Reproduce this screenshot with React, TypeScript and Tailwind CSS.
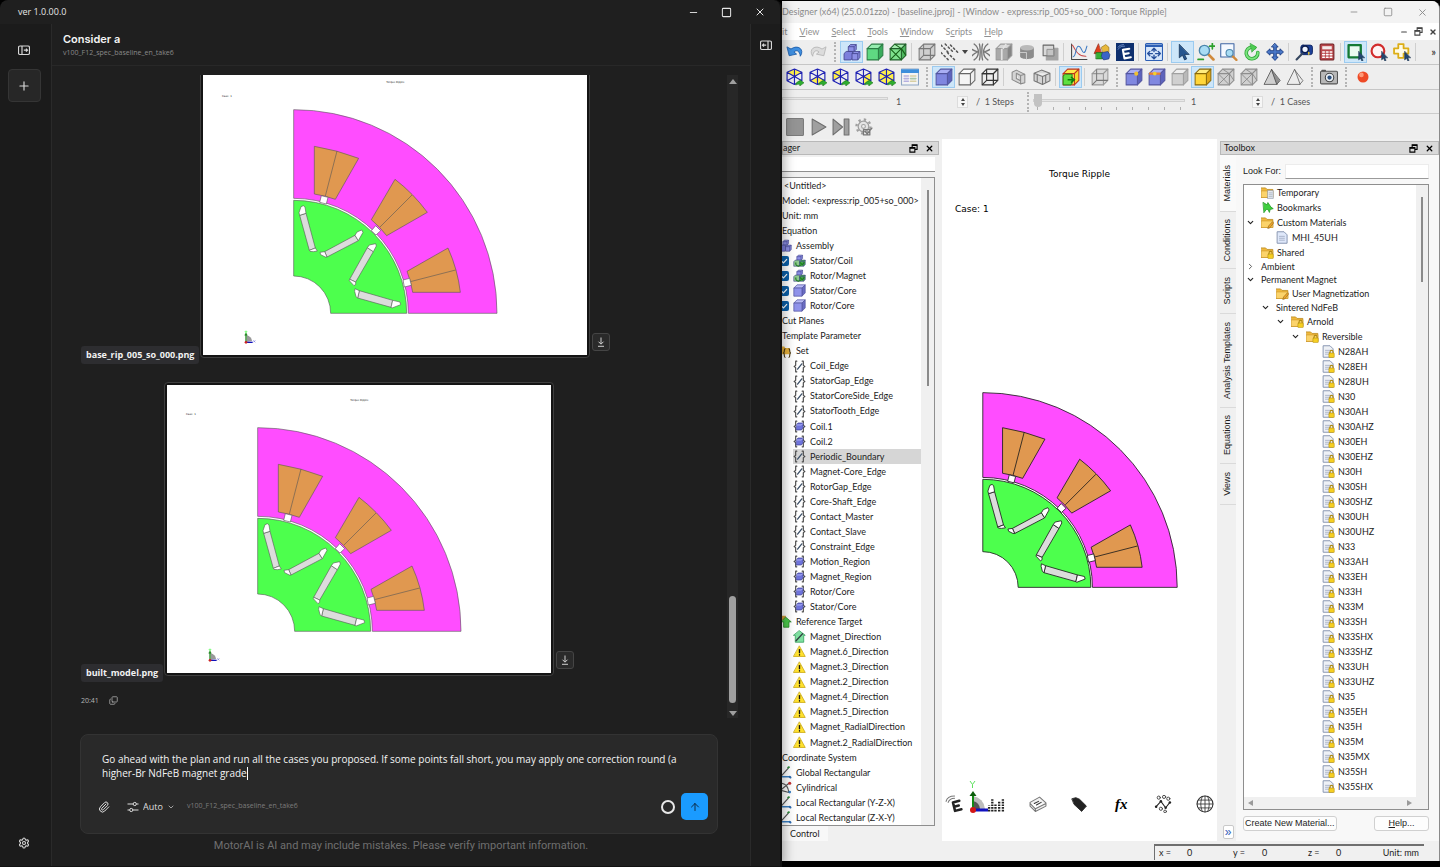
import React from "react";
import {
  ArrowUp,
  ChevronDown,
  ChevronRight,
  Copy,
  Minus,
  Paperclip,
  Plus,
  Settings,
  Square,
  X,
} from "lucide-react";

/* ---------- motor cross-section drawing ---------- */

function MotorShapes({ stroke, weight }: { stroke: string; weight: number }) {
  const coils = [
    "M343 229 Q411 240 476 265 L406 388 Q375 377 343 372 Z",
    "M585 328 Q640 370 682 427 L560 497 Q540 471 514 449 Z",
    "M744 534 Q773 598 781 667 L638 667 Q633 635 621 604 Z",
  ];
  const openings = [
    "M364 377 L384 382 L379 402 L359 397 Z",
    "M527 467 L542 482 L528 495 L514 482 Z",
    "M609 630 L629 625 L634 646 L613 651 Z",
  ];
  const magnets = [
    "M299 436 L318 430 L346 534 L328 541 Z",
    "M374 545 L465 496 L475 512 L381 561 Z",
    "M502 533 L520 545 L467 636 L449 628 Z",
    "M478 662 L578 691 L573 712 L473 684 Z",
  ];
  const pockets = [
    "M299 436 L297 428 L303 410 L310 407 L315 411 L318 430 Z",
    "M328 541 L346 534 L352 543 L340 545 L330 544 Z",
    "M374 545 L360 547 L362 554 L376 561 L381 561 Z",
    "M465 496 L471 486 L485 480 L489 487 L475 512 Z",
    "M502 533 L508 525 L527 521 L529 528 L520 545 Z",
    "M449 628 L448 632 L462 647 L467 643 L467 636 Z",
    "M478 662 L465 656 L464 664 L468 680 L473 684 Z",
    "M578 691 L600 696 L602 704 L576 714 L573 712 Z",
  ];
  return (
    <g stroke={stroke} strokeWidth={weight} strokeLinejoin="round">
      <path d="M281 119 A610 611 0 0 1 891 730 L625 730 A344 345 0 0 0 281 385 Z" fill="#ff4dff" />
      {coils.map((d) => (
        <path key={d} d={d} fill="#e09850" />
      ))}
      <path d="M411 243 L376 378 M636 375 L540 471 M767 600 L631 635" fill="none" />
      {openings.map((d) => (
        <path key={d} d={d} fill="#ffffff" />
      ))}
      <path d="M281 391 A339 339 0 0 1 620 730 L392 730 A111 112 0 0 0 281 618 Z" fill="#4dff4d" />
      {magnets.map((d) => (
        <path key={d} d={d} fill="#dcdcdc" />
      ))}
      {pockets.map((d) => (
        <path key={d} d={d} fill="#ffffff" />
      ))}
    </g>
  );
}

function MotorImage({ label }: { label: string }) {
  return (
    <svg role="img" aria-label={label} viewBox="9 -9 1152 864" className="block h-72 w-96 bg-white">
      <text x="586" y="39" textAnchor="middle" fontSize="8" fontFamily="DejaVu Sans" fill="#222">
        Torque Ripple
      </text>
      <text x="66" y="82" fontSize="8" fontFamily="DejaVu Sans" fill="#222">
        Case: 1
      </text>
      <MotorShapes stroke="#555" weight={1.8} />
      <g strokeWidth="4" fill="none">
        <path d="M140 796 A20 20 0 0 1 156 813 L140 815 Z" fill="#999" />
        <path d="M138 817 V792 M135 797 L138 791 L141 797" stroke="#2a8a2a" />
        <path d="M135 783 L138 787 L141 783" stroke="#8f8" />
        <path d="M138 817 H158" stroke="#11b" />
        <path d="M160 811 L166 817 M166 811 L160 817" stroke="#77d" strokeWidth="2" />
        <circle cx="138" cy="817" r="4" fill="#c22" stroke="none" />
      </g>
    </svg>
  );
}

/* ---------- toolbar glyphs ---------- */

const svgCls = "block h-[18px] w-[18px]";

type CubeProps = {
  f?: string;
  t?: string;
  s?: string;
  k?: string;
  cls?: string;
  children?: React.ReactNode;
};

function Cube({ f = "#8f92ea", t = "#b9bbf6", s = "#6a6cc4", k = "#5456a0", cls = svgCls, children }: CubeProps) {
  return (
    <svg viewBox="0 0 16 16" className={cls}>
      <g stroke={k} strokeWidth="0.9" strokeLinejoin="round">
        <path d="M1 5 L5 1 H15 L11 5 Z" fill={t} />
        <path d="M11 5 L15 1 V11 L11 15 Z" fill={s} />
        <path d="M1 5 H11 V15 H1 Z" fill={f} />
      </g>
      {children}
    </svg>
  );
}

const mesh = <path d="M1 5 L11 15 M11 5 L1 15 M11 5 L15 11 M5 1 L11 5" stroke="#8a8a8a" strokeWidth="0.8" fill="none" />;
const meshGreen = <path d="M1 5 L11 15 M11 5 L1 15 M11 5 L15 11 M5 1 L11 5" stroke="#176017" strokeWidth="1" fill="none" />;
const inner = <path d="M5 1 V11 H15 M5 11 L1 15" stroke="#777" strokeWidth="0.9" fill="none" />;

function Ghost({ k = "#777", f = "#e4e4e4", children }: { k?: string; f?: string; children?: React.ReactNode }) {
  return (
    <Cube f={f} t={f} s={f} k={k}>
      {children}
    </Cube>
  );
}

function IsoCube({ faces }: { faces: string[] }) {
  return (
    <svg viewBox="0 0 17 17" className={svgCls}>
      {faces.map((d) => (
        <path key={d} d={d} fill="#fff04a" />
      ))}
      <path
        d="M8 1 L15 4 V12 L8 15.500 L1 12 V4 Z M8 8 V15.500 M8 8 L1 4 M8 8 L15 4 M8 8 V1 M8 8 L1 12 M8 8 L15 12"
        fill="none"
        stroke="#1f22b4"
        strokeWidth="1.100"
        strokeLinejoin="round"
      />
      <path d="M9 16 C10 13 12 12 13 12.500 V11 L17 14 L13 17 V15.500 C11 15 10 16 9 16 Z" fill="#2fae2f" stroke="#187018" strokeWidth="0.500" />
    </svg>
  );
}

function Cubes({ cls = svgCls, green = false }: { cls?: string; green?: boolean }) {
  return (
    <svg viewBox="0 0 17 17" className={cls}>
      <g stroke="#42448e" strokeWidth="0.8" strokeLinejoin="round">
        <path d="M5 3.500 L7 1.500 H12.500 V6 L10.500 8 H5 Z" fill="#8d90e6" />
        <path d="M5 3.500 H10.500 V8 M10.500 3.500 L12.500 1.500" fill="none" />
        <path d="M1 10 L3 8 H9 V14 L7.500 16 H1 Z" fill={green ? "#8fc98f" : "#7c7fdc"} />
        <path d="M8.500 10 L10.500 8 H16 V13.500 L14 16 H8.500 Z" fill={green ? "#46b046" : "#8d90e6"} />
        <path d="M8.500 10 H14 V16 M14 10 L16 8" fill="none" />
      </g>
      {green && <path d="M4 11 a3 3 0 1 0 6 3 M9 11 l3 3 l3 -3" stroke="#1d7a1d" strokeWidth="1.400" fill="none" />}
    </svg>
  );
}

function Draw({ children, cls = svgCls }: { children: React.ReactNode; cls?: string }) {
  return (
    <svg viewBox="0 0 17 17" className={cls} fill="none" strokeLinecap="round" strokeLinejoin="round">
      {children}
    </svg>
  );
}

function Restore() {
  return (
    <svg viewBox="0 0 10 10" className="block h-[9px] w-[9px]" fill="none" stroke="currentColor" strokeWidth="1.200">
      <path d="M1 4 H6.500 V9 H1 Z M3.500 4 V1 H9 V6 H6.500" />
      <path d="M1 4.500 H6.500 M3.500 1.500 H9" strokeWidth="1.600" />
    </svg>
  );
}

type ToolDef = { id: string; icon: React.ReactNode; on?: boolean };
type ToolEntry = ToolDef | "sep" | "grip" | "arrow";

const cursor = (
  <path d="M11 8 V16 L12.800 14.500 L14 17 L15.200 16.500 L14 14 H16.500 Z" fill="#24466e" stroke="#16304e" strokeWidth="0.500" />
);

const toolbarA: ToolEntry[] = [
  {
    id: "Undo",
    icon: (
      <Draw>
        <path d="M1 4 L3 12 L10 10.500 L7.500 8.500 C10 6 13 7.500 13.500 12.500 C18 6 11 1 5 5.500 Z" fill="#3f8fe0" stroke="#1e5ca8" strokeWidth="0.800" />
      </Draw>
    ),
  },
  {
    id: "Redo",
    icon: (
      <Draw>
        <path d="M16 4 L14 12 L7 10.500 L9.500 8.500 C7 6 4 7.500 3.500 12.500 C-1 6 6 1 12 5.500 Z" fill="#dcdcdc" stroke="#b4b4b4" strokeWidth="0.800" />
      </Draw>
    ),
  },
  "grip",
  { id: "Assembly", icon: <Cubes />, on: true },
  { id: "Solid", icon: <Cube f="#5fd982" t="#97edb0" s="#3aab5c" k="#2b7d44" /> },
  {
    id: "Mesh",
    icon: (
      <Cube f="#7ee08c" t="#a6edb0" s="#4fb860" k="#205f2b">
        {meshGreen}
      </Cube>
    ),
  },
  "sep",
  { id: "Part box", icon: <Ghost f="#cfcfcf">{inner}</Ghost> },
  {
    id: "Section lines",
    icon: (
      <Draw>
        <path d="M0 2 L7 9 M4 1 L12 9 M9 2 L16 9 M0 9 L7 16 M6 9 L13 16" stroke="#555" strokeWidth="1.400" strokeDasharray="1.500 2.500" />
      </Draw>
    ),
  },
  "arrow",
  {
    id: "Flux lines",
    icon: (
      <Draw>
        <path d="M2 1 C6 4 6 7 6 8.500 C6 11 5 14 2 16 M15 1 C11 4 11 7 11 8.500 C11 11 12 14 15 16 M7 1 C8 4 8 13 7 16 M10 1 C9 4 9 13 10 16 M0 6 C3 8 5 8 5 8.500 C4 9 2 10 0 12 M17 6 C14 8 12 8 12 8.500 C13 9 15 10 17 12" stroke="#777" strokeWidth="1.300" />
      </Draw>
    ),
  },
  { id: "Contour", icon: <Cube f="#a9a9a9" t="#d8d8d8" s="#858585" k="#9a9a9a"><path d="M6 5 V15 M10 1 L7 5" stroke="#e2e2e2" strokeWidth="1.500" /></Cube> },
  {
    id: "Cylinder",
    icon: (
      <Draw>
        <path d="M2 4.500 V12.500 C2 16 15 16 15 12.500 V4.500 Z" fill="#8c8c8c" />
        <ellipse cx="8.500" cy="4.500" rx="6.500" ry="2.600" fill="#b9b9b9" />
        <path d="M2 9 H8 V15" stroke="#c9c9c9" />
      </Draw>
    ),
  },
  {
    id: "Overlap",
    icon: (
      <Draw>
        <path d="M5 5 H16 V16 H5 Z" fill="#a4a4a4" stroke="#a4a4a4" />
        <rect x="2" y="2" width="10" height="10" fill="#d9d9d9" stroke="#666" />
        <path d="M6 6 H12 V12 H6 Z" fill="#c4c4c4" stroke="#888" strokeWidth="0.800" />
      </Draw>
    ),
  },
  "sep",
  {
    id: "Graph",
    icon: (
      <Draw>
        <path d="M1.500 1 V15.500 H16" stroke="#444" />
        <path d="M2 2 C4 2 5 13 15 12.500" stroke="#c84848" />
        <path d="M3 13 C6 13 5 3 8 3 C11 3 11 9 13 9 C15 9 15 5 16 3" stroke="#3f7cc4" />
      </Draw>
    ),
  },
  {
    id: "Shapes",
    icon: (
      <Draw>
        <path d="M5 1 L1 10 H8 Z" fill="#e2401c" stroke="#8c2010" strokeWidth="0.600" />
        <path d="M8 4 L12 1.500 L15 4 V9 L10 10 Z" fill="#e8b83a" stroke="#8b6a10" strokeWidth="0.600" />
        <path d="M3 9 H9 V15 H3 Z" fill="#34b134" stroke="#176317" strokeWidth="0.600" />
        <path d="M9 9 L14 8 L16 11 L15 15 L10 16 L8 13 Z" fill="#3a63c8" stroke="#1d3676" strokeWidth="0.600" />
      </Draw>
    ),
  },
  {
    id: "Express",
    icon: (
      <Draw>
        <rect width="17" height="17" fill="#0d2f6e" />
        <path d="M2 4 C3 2 5 2 7 1.500 M2 6 C4 3 6 3 8 3" stroke="#7d9ad2" strokeWidth="0.800" />
        <path d="M12.500 5.500 L6.500 6.500 L8 14.500 L14 13.500 M7.300 10.500 L12 9.700" stroke="#fff" strokeWidth="2" />
      </Draw>
    ),
  },
  "sep",
  {
    id: "Fit all",
    icon: (
      <Draw>
        <rect x="0.500" y="0.500" width="16" height="16" rx="1" fill="#d6e6fb" stroke="#2c5eb4" />
        <path d="M1 2.500 H16" stroke="#2c5eb4" strokeWidth="2.400" />
        <path d="M3 10 H7 M10 10 H14 M8.500 5.500 V8 M8.500 11.500 V15 M4.500 8 L2.500 10 L4.500 12 M12.500 8 L14.500 10 L12.500 12 M6.500 7 L8.500 5 L10.500 7 M6.500 13 L8.500 15 L10.500 13" stroke="#27509c" strokeWidth="1.300" />
      </Draw>
    ),
  },
  "sep",
  {
    id: "Pointer",
    on: true,
    icon: (
      <Draw>
        <path d="M5 1.500 V14 L8 11.500 L10 16 L12 15 L10 10.800 H14 Z" fill="#27568f" stroke="#142f52" strokeWidth="0.700" />
      </Draw>
    ),
  },
  {
    id: "Zoom",
    icon: (
      <Draw>
        <path d="M10.500 10.500 L15.500 15.500" stroke="#d08a3c" strokeWidth="2.600" />
        <circle cx="7" cy="7" r="4.800" fill="#a8dcf4" stroke="#4c86ac" strokeWidth="1.300" />
        <path d="M12 3 H17 M14.500 0.500 V5.500 M1 15.500 H6" stroke="#2ca02c" strokeWidth="1.600" />
      </Draw>
    ),
  },
  {
    id: "Zoom window",
    icon: (
      <Draw>
        <rect x="0.700" y="0.700" width="12.500" height="12.500" fill="#f5f9ff" stroke="#3f66a4" />
        <path d="M11.500 12 L15.500 16" stroke="#d08a3c" strokeWidth="2.200" />
        <circle cx="9" cy="9.500" r="3.300" fill="#a8dcf4" stroke="#4c86ac" />
      </Draw>
    ),
  },
  {
    id: "Rotate",
    icon: (
      <Draw>
        <path d="M11 4.500 A5.500 5.500 0 1 0 14 9" stroke="#31a838" strokeWidth="3.400" />
        <path d="M11 4.500 A5.500 5.500 0 1 0 14 9" stroke="#7be37f" strokeWidth="1.800" />
        <path d="M7 0.500 L13 4 L8.500 8.500 Z" fill="#4ecb53" stroke="#31a838" strokeWidth="0.600" />
      </Draw>
    ),
  },
  {
    id: "Pan",
    icon: (
      <Draw>
        <path d="M8.500 0.500 L11.500 3.800 H9.700 V7.300 H13.200 V5.500 L16.500 8.500 L13.200 11.500 V9.700 H9.700 V13.200 H11.500 L8.500 16.500 L5.500 13.200 H7.300 V9.700 H3.800 V11.500 L0.500 8.500 L3.800 5.500 V7.300 H7.300 V3.800 H5.500 Z" fill="#4a78c8" stroke="#1d3f86" strokeWidth="0.900" />
      </Draw>
    ),
  },
  "sep",
  {
    id: "Search part",
    icon: (
      <Draw>
        <rect x="5.500" y="2" width="11" height="9" rx="2" fill="#1c3f97" stroke="#0d2360" strokeWidth="0.800" />
        <circle cx="9.500" cy="6" r="3.200" fill="#f1f6ff" stroke="#0b1c4c" strokeWidth="1.500" />
        <path d="M7 10 L1.500 15.500" stroke="#36475f" strokeWidth="2" />
        <path d="M13 9 v1.500" stroke="#e5c433" strokeWidth="1.500" />
      </Draw>
    ),
  },
  {
    id: "Calculator",
    icon: (
      <Draw>
        <rect x="2" y="1" width="13" height="15" rx="1" fill="#b9474b" stroke="#702226" />
        <rect x="4" y="3" width="9" height="3" fill="#f5e9e9" />
        <path d="M4.500 8.500 h1.500 M8 8.500 h1.500 M11.500 8.500 h1.500 M4.500 11 h1.500 M8 11 h1.500 M11.500 11 h1.500 M4.500 13.500 h1.500 M8 13.500 h1.500 M11.500 13.500 h1.500" stroke="#fff" strokeWidth="1.500" />
      </Draw>
    ),
  },
  "sep",
  {
    id: "Box select",
    on: true,
    icon: (
      <Draw>
        <rect x="1.500" y="2" width="11.500" height="11.500" fill="#eafaf0" stroke="#147a34" strokeWidth="2.200" />
        {cursor}
      </Draw>
    ),
  },
  {
    id: "Circle select",
    icon: (
      <Draw>
        <circle cx="7.500" cy="7.500" r="6" fill="#fff4f4" stroke="#d22c2c" strokeWidth="2" />
        {cursor}
      </Draw>
    ),
  },
  {
    id: "Polygon select",
    icon: (
      <Draw>
        <path d="M5 1 H10 V5 H14.500 V10 H10 V14 H5 V10 H1 V5 H5 Z" fill="#fffbe6" stroke="#dcae18" strokeWidth="1.700" />
        {cursor}
      </Draw>
    ),
  },
  "sep",
];

const topFace = "M8 1 L15 4 L8 8 L1 4 Z";
const bottomFace = "M8 8 L15 12 L8 15 L1 12 Z";
const leftFace = "M1 4 L8 8 L1 12 Z";
const rightFace = "M8 8 L15 4 V12 L8 15 Z";

const toolbarB: ToolEntry[] = [
  { id: "Top face", icon: <IsoCube faces={[topFace]} /> },
  { id: "Bottom face", icon: <IsoCube faces={[bottomFace]} /> },
  { id: "Left face", icon: <IsoCube faces={[leftFace, "M8 1 L8 8 L1 4 Z"]} /> },
  { id: "Right face", icon: <IsoCube faces={[rightFace]} /> },
  { id: "All faces", icon: <IsoCube faces={[topFace, rightFace, "M1 4 L8 8 V15 L1 12 Z"]} /> },
  {
    id: "Schedule",
    icon: (
      <Draw>
        <rect x="0.500" y="1" width="16" height="15" fill="#f4f4f4" stroke="#8ea6c4" />
        <path d="M1 3 H16" stroke="#3d8edb" strokeWidth="3.500" />
        <path d="M3 7.500 h4 M3 10 h4 M3 12.500 h4" stroke="#b5b0e0" strokeWidth="1.500" />
        <path d="M9 7.500 h5 M9 12.500 h5" stroke="#d8cfa2" strokeWidth="1.500" />
        <path d="M9 10 h5" stroke="#a9c7a9" strokeWidth="1.500" />
      </Draw>
    ),
  },
  "grip",
  { id: "Shaded", on: true, icon: <Cube f="#7f86e0" t="#a9aef4" s="#5d63bd" /> },
  { id: "Outline", icon: <Cube f="#f4f4f4" t="#fafafa" s="#efefef" k="#666" /> },
  { id: "Wireframe", icon: <Cube f="none" t="none" s="none" k="#333"><path d="M5 1 V11 H15 M5 11 L1 15" stroke="#333" fill="none" /></Cube> },
  "sep",
  { id: "Clip plane", icon: <Draw><path d="M2 4 L6 2 L14 6 V14 L10 15 L2 11 Z M6 5 L10 7 V15 M10 7 L14 6 M6 5 V10 L10 12" stroke="#8a8a8a" fill="#d4d4d4" /></Draw> },
  { id: "Clip box", icon: <Draw><path d="M1 5 L8 2 L16 5 V12 L9 15.500 L1 12 Z M1 5 L9 8 L16 5 M9 8 V15.500 M4 6 V13 M12 7 V14" stroke="#777" fill="#d4d4d4" /></Draw> },
  "sep",
  {
    id: "Highlight part",
    on: true,
    icon: (
      <Cube f="#ffe94a" t="#ffe94a" s="#f4d92c" k="#c2321a">
        <path d="M1 7 L3 5.500 H9 V13.500 L8 15 H1 Z" fill="#5fe040" stroke="#1c7a18" strokeWidth="0.800" />
        <path d="M5 10.500 H10 M8 8 L11 10.500 L8 13" stroke="#0e7d0e" strokeWidth="1.300" fill="none" />
      </Cube>
    ),
  },
  "sep",
  { id: "Transparent", icon: <Ghost f="#dadada" k="#999">{inner}</Ghost> },
  "grip",
  { id: "Vertex", icon: <Cube f="#8088e0" t="#a9aef4" s="#5d63bd"><circle cx="10" cy="5" r="1.800" fill="#f0c030" /></Cube> },
  { id: "Edge", icon: <Cube f="#8088e0" t="#a9aef4" s="#5d63bd"><path d="M1 5 H11" stroke="#f08030" strokeWidth="2" /><circle cx="6" cy="5" r="1.600" fill="#f0d030" /></Cube> },
  { id: "Face", icon: <Cube f="#d0d0d0" t="#efefef" s="#b9b9b9" k="#a0a0a0" /> },
  { id: "Body", on: true, icon: <Cube f="#ffd63a" t="#ffec80" s="#e0a818" k="#8c6a08" /> },
  { id: "Mesh node", icon: <Ghost f="#d0d0d0" k="#8e8e8e">{mesh}</Ghost> },
  { id: "Mesh element", icon: <Ghost f="#d0d0d0" k="#8e8e8e">{mesh}</Ghost> },
  { id: "Tetra", icon: <Draw><path d="M8 1.500 L1 15.500 H13 Z" fill="#cfcfcf" stroke="#555" strokeWidth="0.800" /><path d="M8 1.500 L13 15.500 L16 12 Z" fill="#8f8f8f" stroke="#555" strokeWidth="0.800" /></Draw> },
  { id: "Tetra outline", icon: <Draw><path d="M8 1.500 L1 15.500 H13 Z M8 1.500 L16 12 L13 15.500" fill="#ececec" stroke="#666" strokeWidth="0.800" /></Draw> },
  "grip",
  {
    id: "Capture",
    icon: (
      <Draw>
        <rect x="0.500" y="3" width="16" height="12" rx="1" fill="#b8b8b8" stroke="#555" />
        <path d="M2 2.500 h3" stroke="#555" strokeWidth="1.500" />
        <circle cx="9" cy="9" r="4" fill="#e8eef4" stroke="#444" />
        <circle cx="9" cy="9" r="2" fill="#2c4f7c" />
      </Draw>
    ),
  },
  "grip",
  {
    id: "Record",
    icon: (
      <Draw>
        <circle cx="8.500" cy="8.500" r="5.200" fill="#ee4a26" />
        <circle cx="7" cy="6.500" r="2.200" fill="#ff9a78" />
      </Draw>
    ),
  },
];

function Grip() {
  return <span className="mx-1 h-5 w-[3px] shrink-0 border-r-2 border-dotted border-[#b4b4b4]" />;
}

function Toolbar({ items, label, children }: { items: ToolEntry[]; label: string; children?: React.ReactNode }) {
  return (
    <div role="toolbar" aria-label={label} className="flex h-[25px] shrink-0 items-center border-b border-[#c6c6c6] bg-[#eeeeee] pl-px">
      {items.map((it, i) => {
        if (it === "sep") return <span key={i} className="mx-[2px] h-[18px] w-[2px] border-l border-[#cfcfcf]" />;
        if (it === "grip") return <Grip key={i} />;
        if (it === "arrow")
          return <span key={i} className="mx-[1px] h-0 w-0 border-x-[3px] border-t-4 border-x-transparent border-t-[#444]" />;
        return (
          <button
            key={i}
            type="button"
            aria-label={it.id}
            className={
              it.on
                ? "flex h-[22px] w-[23px] shrink-0 items-center justify-center border border-[#9ccbf0] bg-[#cde6f9]"
                : "flex h-[22px] w-[23px] shrink-0 items-center justify-center"
            }
          >
            {it.icon}
          </button>
        );
      })}
      {children}
    </div>
  );
}

/* ---------- tree icons ---------- */

const treeIcon = "block h-[13px] w-[13px] shrink-0";

const braces = "M5 1.500 H3.500 V7 L1.500 8.500 L3.500 10 V15.500 H5 M12 1.500 H13.500 V7 L15.500 8.500 L13.500 10 V15.500 H12";

function EdgeSet() {
  return (
    <Draw cls={treeIcon}>
      <path d={braces} stroke="#4a4a4a" strokeWidth="1.500" />
      <path d="M6 12 L11.500 5" stroke="#3c5068" strokeWidth="1.700" />
    </Draw>
  );
}

function RegionSet() {
  return (
    <Draw cls={treeIcon}>
      <path d={braces} stroke="#4a4a4a" strokeWidth="1.500" />
      <path d="M4.500 6.500 L6.500 4 H13 V10 L11 13 H4.500 Z" fill="#6f74dc" stroke="#3f429c" />
      <path d="M5 6.500 H11 L13 4.500" stroke="#c3c5fa" />
    </Draw>
  );
}

function Warn() {
  return (
    <Draw cls={treeIcon}>
      <path d="M8.500 1.500 L16 15 H1 Z" fill="#ffe12e" stroke="#c9a50c" />
      <path d="M8.500 6 V10" stroke="#111" strokeWidth="1.800" />
      <path d="M8.500 12.800 v0.200" stroke="#111" strokeWidth="1.800" />
    </Draw>
  );
}

function Axes() {
  return (
    <Draw cls={treeIcon}>
      <path d="M2 14 L12 3" stroke="#555" strokeWidth="1.500" />
      <path d="M2 14 H14" stroke="#3a80c4" strokeWidth="1.800" />
      <path d="M12 2 l1 -0.500" stroke="#2c8a3a" strokeWidth="2.400" />
      <path d="M14 14 l1 1" stroke="#2c6ab0" strokeWidth="2.600" />
    </Draw>
  );
}

function Cylindrical() {
  return (
    <Draw cls={treeIcon}>
      <path d="M2 3 C8 3 12 8 13 15 M2 12 L13 3 M2 12 L13 15" stroke="#555" strokeWidth="1.500" />
      <circle cx="14" cy="3" r="2" fill="#c43030" />
      <circle cx="14" cy="14.500" r="1.800" fill="#3a80c4" />
    </Draw>
  );
}

function BlueCube() {
  return <Cube cls={treeIcon} />;
}

function Folder({ mark }: { mark?: "page" | "pencil" | "lock" }) {
  return (
    <Draw cls={treeIcon}>
      <path d="M0.500 2.500 H6 L8 4.500 H15.500 V15 H0.500 Z" fill="#f0b93c" stroke="#b98618" />
      <path d="M0.500 6.500 H15.500 V15 H0.500 Z" fill="#fbd36b" stroke="#c8942a" strokeWidth="0.700" />
      {mark === "page" && <path d="M9 6 H16 V16.500 H9 Z M10.500 9 h4 M10.500 11.500 h4 M10.500 14 h4" fill="#e8ecf2" stroke="#8b97a8" strokeWidth="0.800" />}
      {mark === "pencil" && <path d="M9 16 L10 13 L15 7.500 L16.500 9 L12 15 Z" fill="#f4a92c" stroke="#8a5d10" strokeWidth="0.800" />}
      {mark === "lock" && <Lock />}
    </Draw>
  );
}

function Lock() {
  return (
    <g>
      <path d="M10.500 11 V9 a2 2 0 0 1 4 0 V11" stroke="#b08a10" strokeWidth="1.400" />
      <rect x="9" y="10.500" width="7" height="6" rx="0.800" fill="#f6cf22" stroke="#b08a10" strokeWidth="0.700" />
    </g>
  );
}

function Page({ lock = false }: { lock?: boolean }) {
  return (
    <Draw cls={treeIcon}>
      <path d="M2 1 H10.500 L14.500 5 V16 H2 Z" fill={lock ? "#eef1f6" : "#dfe8fa"} stroke="#7f8eac" strokeWidth="1.200" />
      <path d="M4.500 7 H11 M4.500 9.500 H11 M4.500 12 H11" stroke="#9aa6bd" />
      {lock && <Lock />}
    </Draw>
  );
}

function GreenArrow() {
  return (
    <Draw cls={treeIcon}>
      <path d="M3 2 L8 5 L9 2 L13 8 L16 10 L12 11 L11 15 L9 11 L7 11 L4 15 Z" fill="#3fcf3f" stroke="#239a23" />
    </Draw>
  );
}

/* ---------- model tree ---------- */

type Row = { text: string; depth: 0 | 1 | 2; icon?: React.ReactNode; check?: boolean; selected?: boolean; root?: boolean };

const edge = (text: string): Row => ({ text, depth: 2, icon: <EdgeSet /> });
const region = (text: string): Row => ({ text, depth: 2, icon: <RegionSet /> });
const warn = (text: string): Row => ({ text, depth: 2, icon: <Warn /> });

const modelRows: Row[] = [
  { text: "<Untitled>", depth: 0, root: true },
  { text: "Model: <express:rip_005+so_000>", depth: 0 },
  { text: "Unit: mm", depth: 0 },
  { text: "Equation", depth: 0 },
  { text: "Assembly", depth: 1, icon: <Cubes cls={treeIcon} /> },
  { text: "Stator/Coil", depth: 2, check: true, icon: <Cubes cls={treeIcon} green /> },
  { text: "Rotor/Magnet", depth: 2, check: true, icon: <Cubes cls={treeIcon} green /> },
  { text: "Stator/Core", depth: 2, check: true, icon: <BlueCube /> },
  { text: "Rotor/Core", depth: 2, check: true, icon: <BlueCube /> },
  { text: "Cut Planes", depth: 0 },
  { text: "Template Parameter", depth: 0 },
  {
    text: "Set",
    depth: 1,
    icon: (
      <Draw cls={treeIcon}>
        <path d="M1 2 H7 L8 4 H14 V12 H1 Z" fill="#e8b23c" />
        <path d="M8 5 C6 5 8 9 6 10.500 C8 12 6 16 8 16 M13 5 C15 5 13 9 15 10.500 C13 12 15 16 13 16" stroke="#4c3a10" strokeWidth="1.500" />
      </Draw>
    ),
  },
  edge("Coil_Edge"),
  edge("StatorGap_Edge"),
  edge("StatorCoreSide_Edge"),
  edge("StatorTooth_Edge"),
  region("Coil.1"),
  region("Coil.2"),
  { ...edge("Periodic_Boundary"), selected: true },
  edge("Magnet-Core_Edge"),
  edge("RotorGap_Edge"),
  edge("Core-Shaft_Edge"),
  edge("Contact_Master"),
  edge("Contact_Slave"),
  edge("Constraint_Edge"),
  region("Motion_Region"),
  region("Magnet_Region"),
  region("Rotor/Core"),
  region("Stator/Core"),
  {
    text: "Reference Target",
    depth: 1,
    icon: (
      <Draw cls={treeIcon}>
        <path d="M0 1 H9 V7 H0 Z" fill="#d4a13c" />
        <path d="M9 3 L16 9 H13 V16 H6 V9 H3 Z" fill="#4cc94c" stroke="#1f7f1f" />
      </Draw>
    ),
  },
  {
    text: "Magnet_Direction",
    depth: 2,
    icon: (
      <Draw cls={treeIcon}>
        <path d="M8.500 1 L16 7 H14 V16 H3 V7 H1 Z" fill="#7fe0a0" stroke="#2f9b58" />
        <path d="M4 14 L12.500 5" stroke="#344" strokeWidth="1.800" />
      </Draw>
    ),
  },
  warn("Magnet.6_Direction"),
  warn("Magnet.3_Direction"),
  warn("Magnet.2_Direction"),
  warn("Magnet.4_Direction"),
  warn("Magnet.5_Direction"),
  warn("Magnet_RadialDirection"),
  warn("Magnet.2_RadialDirection"),
  { text: "Coordinate System", depth: 0 },
  { text: "Global Rectangular", depth: 1, icon: <Axes /> },
  { text: "Cylindrical", depth: 1, icon: <Cylindrical /> },
  { text: "Local Rectangular (Y-Z-X)", depth: 1, icon: <Axes /> },
  { text: "Local Rectangular (Z-X-Y)", depth: 1, icon: <Axes /> },
];

function ModelRow({ row }: { row: Row }) {
  if (row.depth === 0)
    return <li className={row.root ? "flex min-h-0 flex-1 items-center pl-[2px]" : "flex min-h-0 flex-1 items-center"}>{row.text}</li>;
  if (row.depth === 1)
    return (
      <li className="flex min-h-0 flex-1 items-center gap-[2px]">
        <span className="-ml-[3px]">{row.icon}</span>
        <span className="pl-[2px]">{row.text}</span>
      </li>
    );
  return (
    <li className="flex min-h-0 flex-1 items-center">
      {row.check ? (
        <label className="-ml-[3px] grid w-[14px] grid-cols-[10px] place-items-center">
          <input type="checkbox" defaultChecked aria-label={row.text} className="h-[10px] w-[10px] appearance-none rounded-[2px] bg-[#0a5fa8] [grid-area:1/1]" />
          <svg viewBox="0 0 10 10" className="h-[10px] w-[10px] [grid-area:1/1]" fill="none" stroke="#ffffff" strokeWidth="1.200">
            <path d="M3 5.500 L4.500 7 L8 3.200" />
          </svg>
        </label>
      ) : (
        <span className="w-[11px]" />
      )}
      <span className={row.selected ? "-my-px flex h-[15px] flex-1 items-center gap-1 bg-[#d6d6d6]" : "flex flex-1 items-center gap-1"}>
        {row.icon}
        {row.text}
      </span>
    </li>
  );
}

/* ---------- materials tree ---------- */

type Mat = { text: string; pad: string; icon?: React.ReactNode; open?: "down" | "right"; short?: boolean };

const grades = [
  "N28AH", "N28EH", "N28UH", "N30", "N30AH", "N30AHZ", "N30EH", "N30EHZ", "N30H", "N30SH",
  "N30SHZ", "N30UH", "N30UHZ", "N33", "N33AH", "N33EH", "N33H", "N33M", "N33SH", "N33SHX",
  "N33SHZ", "N33UH", "N33UHZ", "N35", "N35EH", "N35H", "N35M", "N35MX", "N35SH", "N35SHX",
];

const materials: Mat[] = [
  { text: "Temporary", pad: "pl-0", icon: <Folder mark="page" /> },
  { text: "Bookmarks", pad: "pl-0", icon: <GreenArrow /> },
  { text: "Custom Materials", pad: "pl-0", icon: <Folder mark="pencil" />, open: "down" },
  { text: "MHI_45UH", pad: "pl-[15px]", icon: <Page /> },
  { text: "Shared", pad: "pl-0", icon: <Folder mark="lock" /> },
  { text: "Ambient", pad: "pl-0", open: "right", short: true },
  { text: "Permanent Magnet", pad: "pl-0", open: "down", short: true },
  { text: "User Magnetization", pad: "pl-[15px]", icon: <Folder mark="pencil" /> },
  { text: "Sintered NdFeB", pad: "pl-[15px]", open: "down", short: true },
  { text: "Arnold", pad: "pl-[30px]", icon: <Folder mark="lock" />, open: "down" },
  { text: "Reversible", pad: "pl-[45px]", icon: <Folder mark="lock" />, open: "down" },
  ...grades.map((text): Mat => ({ text, pad: "pl-[61px]", icon: <Page lock /> })),
];

function MaterialRow({ m }: { m: Mat }) {
  return (
    <li className={`${m.short ? "h-[13px]" : "h-[15px]"} flex items-center ${m.pad}`}>
      <span className="flex w-[17px] shrink-0 items-center pl-[2px]">
        {m.open === "down" && <ChevronDown className="h-[9px] w-[9px] text-[#222]" strokeWidth={3} />}
        {m.open === "right" && <ChevronRight className="h-[9px] w-[9px] text-[#555]" strokeWidth={2.5} />}
      </span>
      <span className="flex items-center gap-[3px]">
        {m.icon}
        {m.text}
      </span>
    </li>
  );
}

/* ---------- chat window ---------- */

function Attachment({ name }: { name: string }) {
  return (
    <div className="flex items-end">
      <span className="rounded-[3px] bg-[#2d2d30] px-[5px] text-[9px] leading-[18px] font-bold text-[#f2f2f2]">{name}</span>
      <span className="mr-[2px] mb-[6px] ml-px rounded-[4px] border border-[#3f3f3f] bg-[#141414] p-[2px]">
        <MotorImage label={name} />
      </span>
      <button
        type="button"
        aria-label={`Download ${name}`}
        className="mb-[13px] flex h-[18px] w-[18px] items-center justify-center rounded-[3px] border border-[#454545] bg-[#2a2a2a]"
      >
        <svg viewBox="0 0 10 10" className="h-[10px] w-[10px]" fill="none" stroke="#d0d0d0" strokeWidth="1">
          <path d="M5 0.500 V7 M2.500 4.700 L5 7.200 L7.500 4.700 M2 9.300 H8" />
        </svg>
      </button>
    </div>
  );
}

function ChatWindow() {
  return (
    <section className="z-10 flex min-w-0 flex-col rounded-t-lg border-r-2 border-b border-[#121212] bg-[#1f1f1f] font-['Open_Sans','Noto_Sans',sans-serif] shadow-[2px_0_12px_rgba(0,0,0,0.35)]">
      <header className="flex h-6 shrink-0 items-center justify-between pr-[14px] pl-[18px] text-[#e6e6e6]">
        <span className="text-[9px]">ver 1.0.00.0</span>
        <span className="flex items-center gap-[22px]">
          <button type="button" aria-label="Minimize"><Minus className="h-[11px] w-[11px]" strokeWidth={2} /></button>
          <button type="button" aria-label="Maximize"><Square className="h-[11px] w-[11px]" strokeWidth={2.2} /></button>
          <button type="button" aria-label="Close"><X className="h-3 w-3" strokeWidth={2} /></button>
        </span>
      </header>
      <div className="flex min-h-0 flex-1">
        <nav className="flex w-[52px] shrink-0 flex-col items-center border-r border-[#2a2a2a] bg-[#1b1b1b] pr-[3px] pt-5 pb-[17px] text-[#d8d8d8]">
          <button type="button" aria-label="Expand sidebar">
            <SidebarIcon />
          </button>
          <button
            type="button"
            aria-label="New chat"
            className="mt-[13px] flex h-[33px] w-[33px] items-center justify-center rounded-[4px] border border-[#353535] bg-[#272727]"
          >
            <Plus className="h-[14px] w-[14px]" strokeWidth={2} />
          </button>
          <button type="button" aria-label="Settings" className="mt-auto">
            <Settings className="h-3 w-3" strokeWidth={2.2} />
          </button>
        </nav>
        <main className="flex min-w-0 flex-1 flex-col">
          <div className="h-[42px] shrink-0 border-b border-[#282828] pt-[7px] pl-[11px]">
            <h1 className="font-['Inter',sans-serif] text-[11px] leading-4 font-semibold text-[#f4f4f4]">Consider a</h1>
            <p className="text-[7px] leading-3 text-[#8a8a8a]">v100_F12_spec_baseline_en_take6</p>
          </div>
          <div className="mt-[9px] mr-[12px] flex min-h-0 flex-1 overflow-hidden">
            <div className="flex min-w-0 flex-1 flex-col justify-end overflow-hidden pb-3 pl-[29px]">
              <Attachment name="base_rip_005_so_000.png" />
              <div className="mt-[18px]">
                <Attachment name="built_model.png" />
              </div>
              <div className="mt-[14px] flex h-3 items-center gap-[10px] text-[7px] text-[#b4b4b4]">
                <time>20:41</time>
                <button type="button" aria-label="Copy"><Copy className="h-[9px] w-[9px] -scale-y-100" /></button>
              </div>
            </div>
            <div className="flex w-[11px] flex-col items-center bg-[#272727] pt-1 pb-[2px]">
              <span className="h-0 w-0 border-x-[4px] border-b-[5px] border-x-transparent border-b-[#9f9f9f]" />
              <span className="mt-auto mb-2 h-[107px] w-[7px] rounded-full bg-[#9f9f9f]" />
              <span className="h-0 w-0 border-x-[4px] border-t-[5px] border-x-transparent border-t-[#9f9f9f]" />
            </div>
          </div>
          <form className="mt-4 mr-8 ml-7 flex h-[100px] shrink-0 flex-col rounded-lg border border-[#333333] bg-[#292929] pt-[17px] pr-[9px] pl-[17px]">
            <div className="relative pl-1">
              <textarea
                aria-label="Message"
                rows={2}
                defaultValue={
                  "Go ahead with the plan and run all the cases you proposed. If some points fall short, you may apply one correction round (a\nhigher-Br NdFeB magnet grade"
                }
                className="block w-full resize-none overflow-hidden bg-transparent text-[10px] leading-[14px] whitespace-pre text-[#f4f4f4] outline-none"
              />
              <span className="absolute top-[15px] left-[149px] h-[13px] w-px bg-white" />
            </div>
            <div className="mt-[13px] flex items-center text-[#dedede]">
              <button type="button" aria-label="Attach file"><Paperclip className="h-3 w-3" /></button>
              <svg viewBox="0 0 12 12" className="ml-[17px] h-3 w-3" fill="none" stroke="currentColor" strokeWidth="1">
                <path d="M0.500 3 H6 M9.500 3 H11.500 M0.500 9 H2.500 M6 9 H11.500" />
                <circle cx="7.750" cy="3" r="1.600" />
                <circle cx="4.250" cy="9" r="1.600" />
              </svg>
              <select aria-label="Mode" defaultValue="Auto" className="ml-1 w-6 appearance-none bg-transparent text-[9px] leading-[14px] outline-none">
                <option>Auto</option>
              </select>
              <ChevronDown className="h-2 w-2" />
              <span className="ml-3 text-[7px] text-[#7c7c7c]">v100_F12_spec_baseline_en_take6</span>
              <span className="ml-auto h-[14px] w-[14px] rounded-full border-2 border-[#e8e8e8]" />
              <button type="submit" aria-label="Send" className="ml-[6px] flex h-[27px] w-[27px] items-center justify-center rounded-[5px] bg-[#1a9bff] text-[#0c2c49]">
                <ArrowUp className="h-3 w-3" strokeWidth={2} />
              </button>
            </div>
          </form>
          <p className="h-8 shrink-0 pt-1 text-center font-['Roboto',sans-serif] text-[11px] leading-4 text-[#6f6f6f]">
            MotorAI is AI and may include mistakes. Please verify important information.
          </p>
        </main>
        <aside className="flex w-[30px] shrink-0 flex-col items-center border-l border-[#2a2a2a] bg-[#1c1c1c] pt-[15px] text-[#d8d8d8]">
          <button type="button" aria-label="Expand panel" className="-scale-x-100">
            <SidebarIcon />
          </button>
        </aside>
      </div>
    </section>
  );
}

function SidebarIcon() {
  return (
    <svg viewBox="0 0 12 12" className="h-3 w-3" fill="none" stroke="currentColor" strokeWidth="1.200">
      <rect x="0.500" y="2" width="11" height="8.500" rx="1.500" />
      <path d="M4 2 V10.500 M5.800 6.200 H9.500 M8 4.700 L9.500 6.200 L8 7.700" />
    </svg>
  );
}

/* ---------- designer window ---------- */

function DockTitle({ title, pad }: { title: string; pad: string }) {
  return (
    <div className={`flex h-[14px] shrink-0 items-center justify-between border border-[#b8b8b8] bg-[#d9d9d9] pr-1 ${pad}`}>
      <span>{title}</span>
      <span className="flex items-center gap-[7px] text-black">
        <button type="button" aria-label={`Float ${title}`}><Restore /></button>
        <button type="button" aria-label={`Close ${title}`}><X className="h-[9px] w-[9px]" strokeWidth={3.5} /></button>
      </span>
    </div>
  );
}

function Spinner({ label }: { label: string }) {
  return (
    <button type="button" aria-label={label} className="flex h-3 w-[11px] shrink-0 flex-col items-center justify-center gap-[2px] border border-[#dcdcdc] bg-[#f6f6f6]">
      <span className="h-0 w-0 border-x-2 border-b-[3px] border-x-transparent border-b-[#444]" />
      <span className="h-0 w-0 border-x-2 border-t-[3px] border-x-transparent border-t-[#444]" />
    </button>
  );
}

const rangeCls =
  "h-[13px] w-full appearance-none bg-transparent [&::-webkit-slider-runnable-track]:h-[3px] [&::-webkit-slider-runnable-track]:border [&::-webkit-slider-runnable-track]:border-[#d0d0d0] [&::-webkit-slider-runnable-track]:bg-[#e7e7e7] [&::-webkit-slider-thumb]:-mt-[6px] [&::-webkit-slider-thumb]:h-[13px] [&::-webkit-slider-thumb]:w-2 [&::-webkit-slider-thumb]:appearance-none [&::-webkit-slider-thumb]:rounded-b-full [&::-webkit-slider-thumb]:bg-[#c2c2c2]";

const trackOnlyCls =
  "h-[13px] w-full appearance-none bg-transparent [&::-webkit-slider-runnable-track]:h-[3px] [&::-webkit-slider-runnable-track]:border [&::-webkit-slider-runnable-track]:border-[#d0d0d0] [&::-webkit-slider-runnable-track]:bg-[#e7e7e7] [&::-webkit-slider-thumb]:h-px [&::-webkit-slider-thumb]:w-px [&::-webkit-slider-thumb]:appearance-none";

function StepBar() {
  return (
    <div className="flex h-6 shrink-0 items-center border-b border-[#cccccc] bg-[#eeeeee] text-[9px] text-[#555]">
      <span className="flex w-[106px] pb-[7px]">
        <input type="range" aria-label="Step" min={1} max={2} defaultValue={1} className={trackOnlyCls} />
      </span>
      <input aria-label="Step number" defaultValue="1" className="ml-2 w-[61px] bg-transparent outline-none" />
      <Spinner label="Change step" />
      <span className="ml-2 w-[46px] whitespace-pre">/  1 Steps</span>
      <Grip />
      <span className="flex w-[152px] flex-col">
        <input type="range" aria-label="Case" min={1} max={2} defaultValue={1} className={rangeCls} />
        <span className="flex justify-between px-1">
          {Array.from({ length: 10 }, (_, i) => (
            <span key={i} className="h-[3px] w-px bg-[#b0b0b0]" />
          ))}
        </span>
      </span>
      <input aria-label="Case number" defaultValue="1" className="ml-[6px] w-[61px] bg-transparent outline-none" />
      <Spinner label="Change case" />
      <span className="ml-2 whitespace-pre">/  1 Cases</span>
    </div>
  );
}

function PlayBar() {
  return (
    <div className="flex h-[25px] shrink-0 items-center gap-[5px] bg-[#eeeeee] pl-1">
      <button type="button" aria-label="Stop"><Draw><rect x="0.500" y="0.500" width="16" height="16" rx="1" fill="#949494" stroke="#7b7b7b" /></Draw></button>
      <button type="button" aria-label="Play"><Draw><path d="M3 1 L16 8.500 L3 16 Z" fill="#a0a0a0" stroke="#6e6e6e" /></Draw></button>
      <button type="button" aria-label="Next"><Draw><path d="M1 1 L10 8.500 L1 16 Z" fill="#a0a0a0" stroke="#6e6e6e" /><rect x="11.500" y="1" width="4.500" height="15" fill="#a0a0a0" stroke="#6e6e6e" /></Draw></button>
      <button type="button" aria-label="Run options">
        <Draw>
          <circle cx="8" cy="8" r="6.600" stroke="#a0a0a0" strokeWidth="2.200" strokeDasharray="2.200 3" strokeLinecap="butt" />
          <circle cx="8" cy="8" r="5" fill="#e4e4e4" stroke="#a0a0a0" strokeWidth="1.200" />
          <circle cx="8" cy="8" r="1.800" fill="#eee" stroke="#a0a0a0" />
          <path d="M8 11 H14 V16 H8 Z M9.500 12.500 L11.500 15 L16 9.500" stroke="#777" strokeWidth="1.200" />
        </Draw>
      </button>
    </div>
  );
}

function ModelDock() {
  return (
    <section aria-label="Model manager" className="flex w-[157px] shrink-0 flex-col bg-[#f0f0f0] pt-[2px]">
      <DockTitle title="ager" pad="pl-0" />
      <div className="mr-1 flex min-h-0 flex-1 flex-col">
        <input aria-label="Filter" className="mt-[2px] h-[15px] shrink-0 border-b border-[#8e8e8e] bg-white outline-none" />
        <div className="mt-[5px] flex min-h-0 flex-1 border border-l-0 border-[#8e8e8e] bg-white">
          <ul className="flex min-w-0 flex-1 flex-col whitespace-nowrap">
            {modelRows.map((row, i) => (
              <ModelRow key={i} row={row} />
            ))}
          </ul>
          <span className="flex w-[13px] justify-center bg-[#f0f0f0] pt-3">
            <span className="h-[196px] w-[2px] bg-[#8a8a8a]" />
          </span>
        </div>
      </div>
      <div className="flex h-[15px] w-[46px] items-center bg-[#f8f8f8] pl-2">Control</div>
    </section>
  );
}

function Viewport() {
  return (
    <section aria-label="Model view" className="relative mx-[3px] flex min-w-0 flex-1 flex-col bg-white font-['DejaVu_Sans',sans-serif] text-[9px] text-black">
      <div className="absolute inset-0 flex items-center justify-center">
        <svg viewBox="279 117 614 615" className="h-[196px] w-[196px]">
          <MotorShapes stroke="#1c1c1c" weight={2.6} />
        </svg>
      </div>
      <h2 className="mt-7 text-center leading-[14px]">Torque Ripple</h2>
      <p className="mt-[21px] ml-[13px] leading-[14px]">Case: 1</p>
      <div className="mt-auto mb-7 flex items-center justify-between px-[3px]">
        <button type="button" aria-label="Express">
          <Draw>
            <path d="M1 6 C2 2 6 1 9 1 M3 7 C4 4 7 3 9 3" stroke="#777" />
            <path d="M13.500 5.500 L7.500 7 L9.500 15 L15.500 13.500 M8.500 11 L13 10" stroke="#222" strokeWidth="2.400" />
          </Draw>
        </button>
        <button type="button" aria-label="Histogram">
          <Draw>
            <path d="M2 15.500 V10 M5 15.500 V4 M8 15.500 V8 M11.500 15.500 V6 M15 15.500 V4" stroke="#222" strokeWidth="2.200" strokeDasharray="1.600 0.900" strokeLinecap="butt" />
          </Draw>
        </button>
        <button type="button" aria-label="Report">
          <Draw>
            <path d="M1 7 L10 2 L16 7.500 V10.500 L6 15.500 L1 10.500 Z M1 8 L6 13 L16 8 M6 13 V15.500" stroke="#777" fill="#f2f2f2" />
            <path d="M5 8 L9 6 M7 9.500 L11.500 7" stroke="#333" />
          </Draw>
        </button>
        <button type="button" aria-label="Tag">
          <Draw>
            <path d="M2 3.500 L5.500 2.500 L9 4 L15.500 10.500 L11 15.500 L4 9 Z" fill="#222" stroke="#222" strokeWidth="0.800" />
          </Draw>
        </button>
        <button type="button" aria-label="Function" className="h-[18px] w-[18px] font-['Liberation_Serif',serif] text-[15px] leading-[18px] font-bold italic">
          fx
        </button>
        <button type="button" aria-label="Scatter">
          <Draw>
            <path d="M2 11 L6.500 6 L11 12 L15 7" stroke="#222" />
            <g fill="#fff" stroke="#444" strokeWidth="0.900">
              <circle cx="4.500" cy="2.500" r="1.500" />
              <circle cx="9.500" cy="1.800" r="1.500" />
              <circle cx="13.500" cy="3.500" r="1.500" />
              <circle cx="6.500" cy="13" r="1.500" />
              <circle cx="10.500" cy="15.500" r="1.300" />
            </g>
            <g fill="#222">
              <circle cx="2" cy="11" r="1.200" />
              <circle cx="6.500" cy="6" r="1.200" />
              <circle cx="11" cy="12" r="1.200" />
              <circle cx="15" cy="7" r="1.200" />
            </g>
          </Draw>
        </button>
        <button type="button" aria-label="Sphere grid">
          <Draw>
            <circle cx="8.500" cy="8.500" r="7.500" stroke="#333" />
            <path d="M8.500 1 V16 M1 8.500 H16 M2.500 4.800 H14.500 M2.500 12.200 H14.500 M6 1.500 C4 6 4 11 6 15.500 M11 1.500 C13 6 13 11 11 15.500" stroke="#333" strokeWidth="0.800" />
          </Draw>
        </button>
      </div>
      <svg viewBox="0 0 26 34" className="absolute bottom-[27px] left-6 h-[34px] w-[26px]" fill="none">
        <path d="M4 1 L6.500 4.500 L9 1 M6.500 4.500 V8" stroke="#5fe05f" strokeWidth="1" />
        <path d="M7 16 A14 14 0 0 1 19 29 H7 Z" fill="#bcbcbc" />
        <path d="M7 21 A9 9 0 0 1 14 29 H7 Z" fill="#555" />
        <path d="M7 30 V13" stroke="#128a12" strokeWidth="2" />
        <path d="M3.500 16 L7 11 L10.500 16 Z" fill="#0c5c0c" />
        <path d="M7 30 H22" stroke="#1010c0" strokeWidth="3" />
        <circle cx="7" cy="30" r="3" fill="#d31616" />
      </svg>
    </section>
  );
}

const tabs = [
  { name: "Materials", cls: "h-[57px] bg-[#fafafa]" },
  { name: "Conditions", cls: "h-[57px]" },
  { name: "Scripts", cls: "h-[45px]" },
  { name: "Analysis Templates", cls: "h-[94px]" },
  { name: "Equations", cls: "h-[56px]" },
  { name: "Views", cls: "h-[41px]" },
];

function Toolbox() {
  return (
    <section aria-label="Toolbox" className="flex w-[219px] shrink-0 flex-col bg-[#f0f0f0] pt-[2px]">
      <DockTitle title="Toolbox" pad="pl-[3px]" />
      <div className="flex min-h-0 flex-1">
        <div className="flex w-4 shrink-0 flex-col items-center font-['Liberation_Sans',sans-serif] text-[9px]">
          <div role="tablist" aria-orientation="vertical" className="flex w-full flex-col">
            {tabs.map((t) => (
              <button
                key={t.name}
                type="button"
                role="tab"
                aria-selected={t.name === "Materials"}
                className={`flex w-full items-center justify-center border-b border-[#dadada] ${t.cls}`}
              >
                <span className="rotate-180 whitespace-nowrap [writing-mode:vertical-rl]">{t.name}</span>
              </button>
            ))}
          </div>
          <button type="button" aria-label="More tabs" className="mt-auto mb-[2px] h-[14px] w-[11px] rounded-[2px] border border-[#c9c9c9] bg-white text-[12px] leading-[10px] text-[#3560b8]">
            »
          </button>
        </div>
        <div className="flex min-w-0 flex-1 flex-col bg-[#f8f8f8] pr-[10px] pl-[7px] font-['Liberation_Sans',sans-serif] text-[9px]">
          <label className="mt-[9px] flex items-center gap-1">
            <span className="whitespace-nowrap">Look For:</span>
            <input className="h-[15px] min-w-0 flex-1 border border-[#ececec] border-b-[#9a9a9a] bg-white outline-none" />
          </label>
          <div className="mt-[5px] flex min-h-0 flex-1 flex-col border border-[#8e8e8e] bg-white font-['Lato','Open_Sans',sans-serif]">
            <div className="flex min-h-0 flex-1">
              <ul className="min-w-0 flex-1 overflow-hidden whitespace-nowrap">
                {materials.map((m, i) => (
                  <MaterialRow key={i} m={m} />
                ))}
              </ul>
              <span className="flex w-3 justify-center bg-[#f0f0f0] pt-3">
                <span className="h-[85px] w-[2px] bg-[#8a8a8a]" />
              </span>
            </div>
            <div className="flex h-3 shrink-0 items-center justify-between bg-[#f0f0f0] pr-4 pl-1">
              <span className="h-0 w-0 border-y-[3px] border-r-[5px] border-y-transparent border-r-[#9a9a9a]" />
              <span className="h-0 w-0 border-y-[3px] border-l-[5px] border-y-transparent border-l-[#9a9a9a]" />
            </div>
          </div>
          <div className="mt-[6px] mb-[10px] flex items-center justify-between">
            <button type="button" className="h-[15px] rounded-[3px] border border-[#d0d0d0] bg-[#fdfdfd] px-px leading-[13px] whitespace-nowrap">Create New Material...</button>
            <button type="button" className="h-[15px] w-[55px] rounded-[3px] border border-[#d0d0d0] bg-[#fdfdfd] leading-[13px]">
              <u>H</u>elp...
            </button>
          </div>
        </div>
      </div>
    </section>
  );
}

const menus: [string, string, string][] = [
  ["", "", "it"],
  ["", "V", "iew"],
  ["", "S", "elect"],
  ["", "T", "ools"],
  ["", "W", "indow"],
  ["S", "c", "ripts"],
  ["", "H", "elp"],
];

function DesignerWindow() {
  return (
    <section className="mt-px mb-[6px] flex min-w-0 flex-col overflow-hidden rounded-tr-lg border-r border-[#8a8a8a] bg-[#f0f0f0] font-['Lato','Open_Sans',sans-serif] text-[9px] text-[#1c1c1c]">
      <header className="flex h-[22px] shrink-0 items-center justify-between bg-[#f3f3f3] pr-[11px] text-[#8a8a8a]">
        <span className="whitespace-nowrap">Designer (x64) (25.0.01zzo) - [baseline.jproj] - [Window - express:rip_005+so_000 : Torque Ripple]</span>
        <span className="flex items-center gap-6">
          <button type="button" aria-label="Minimize"><Minus className="h-[10px] w-[10px]" /></button>
          <button type="button" aria-label="Maximize"><Square className="h-[10px] w-[10px]" /></button>
          <button type="button" aria-label="Close"><X className="h-[11px] w-[11px]" /></button>
        </span>
      </header>
      <div className="flex h-[17px] shrink-0 items-center justify-between bg-white pr-[2px] text-[#8f8f8f]">
        <nav className="flex items-center gap-[12px]">
          {menus.map(([a, b, c]) => (
            <button key={a + b + c} type="button">
              {a}
              <u>{b}</u>
              {c}
            </button>
          ))}
        </nav>
        <span className="flex items-center gap-[6px] text-[#444]">
          <button type="button" aria-label="Minimize document"><Minus className="h-2 w-2" strokeWidth={3.5} /></button>
          <button type="button" aria-label="Restore document"><Restore /></button>
          <button type="button" aria-label="Close document"><X className="h-2 w-2" strokeWidth={4} /></button>
        </span>
      </div>
      <Toolbar items={toolbarA} label="Model tools">
        <button type="button" aria-label="More tools" className="mr-[3px] ml-auto text-[11px] leading-3">»</button>
      </Toolbar>
      <Toolbar items={toolbarB} label="Display tools" />
      <StepBar />
      <PlayBar />
      <div className="flex min-h-0 flex-1">
        <ModelDock />
        <Viewport />
        <Toolbox />
      </div>
      <footer className="flex h-5 shrink-0 items-start justify-end pt-[3px]">
        <div className="mr-[15px] flex h-4 w-[270px] items-center border-t-2 border-l border-[#6f6f6f] pl-1 whitespace-pre">
          <span className="w-7">x =</span>
          <span className="w-[46px]">0</span>
          <span className="w-[29px]">y =</span>
          <span className="w-[46px]">0</span>
          <span className="w-7">z =</span>
          <span>0</span>
          <span className="ml-auto pr-[5px]">Unit: mm</span>
        </div>
      </footer>
    </section>
  );
}

export default function App() {
  return (
    <div className="grid h-screen grid-cols-[minmax(0,782fr)_minmax(0,658fr)] grid-rows-[minmax(0,1fr)] overflow-hidden bg-black">
      <ChatWindow />
      <DesignerWindow />
    </div>
  );
}
